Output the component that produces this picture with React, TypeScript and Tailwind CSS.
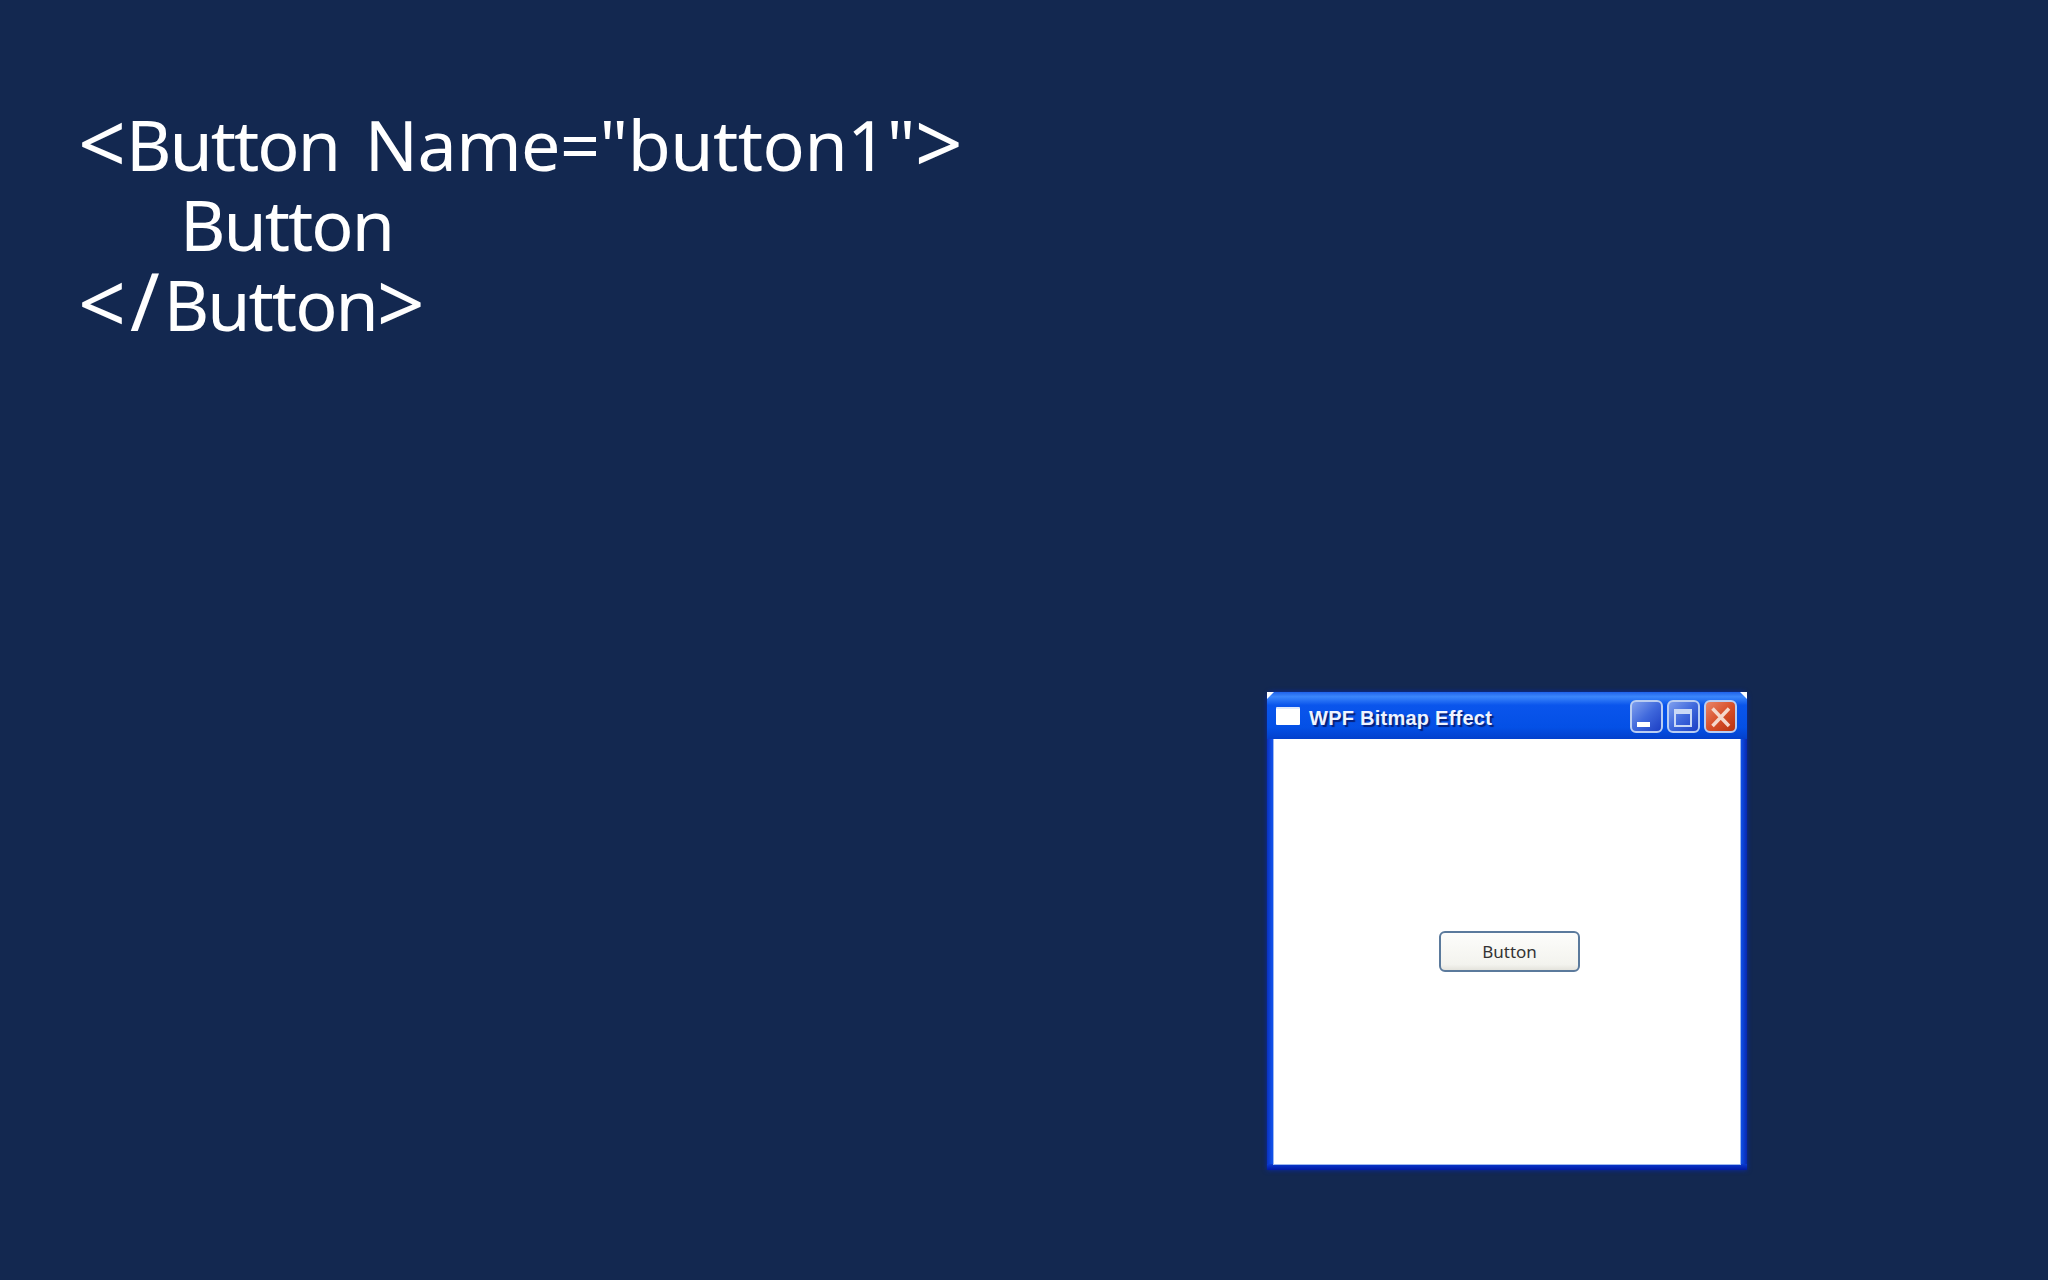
import { useState } from "react";

// XP-style caption button, the glyph is passed in as children
function CaptionButton({ tone, children }: { tone: "blue" | "red"; children: React.ReactNode }) {
  const bg =
    tone === "red"
      ? "bg-[linear-gradient(135deg,#e8866a_0%,#d8502a_50%,#b8330f_100%)]"
      : "bg-[linear-gradient(135deg,#7f9fee_0%,#3f68dc_50%,#1c3fc4_100%)]";
  return (
    <div className={`relative w-[33px] h-[33px] rounded-[6px] border-2 border-[#b9cdf2] ${bg}`}>{children}</div>
  );
}

function XpWindow() {
  const [title] = useState("WPF Bitmap Effect");
  return (
    <div className="absolute left-[1267px] top-[692px] w-[480px] h-[478px] flex flex-col rounded-t-[6px] bg-[linear-gradient(90deg,#0a30c0_0px,#0f50e8_5px,#0f50e8_calc(100%_-_6px),#0828b0_100%)] shadow-[0_0_5px_#0a2aa8]">
      {/* white corner notches */}
      <div className="absolute left-0 top-0 w-[7px] h-[7px] bg-white [clip-path:polygon(0_0,100%_0,0_100%)]" />
      <div className="absolute right-0 top-0 w-[7px] h-[7px] bg-white [clip-path:polygon(0_0,100%_0,100%_100%)]" />
      <div className="h-[47px] shrink-0 flex items-center pl-[9px] pr-[10px] pt-[2px] rounded-t-[6px] bg-[linear-gradient(180deg,#1f62ea_0%,#3b86fb_10%,#0a55ec_28%,#0450e6_75%,#0340cc_100%)]">
        <div className="w-[24px] h-[18px] bg-white rounded-[1px] border-t-2 border-[#dfe9fb] mb-[2px]" />
        <span className="ml-[9px] mt-[3px] text-[20px] font-bold text-[#eef4ff] font-['Liberation_Sans',sans-serif] tracking-[0.25px] [text-shadow:2px_2px_1px_#06207a] leading-none">
          {title}
        </span>
        <div className="ml-auto flex gap-[4px]">
          <CaptionButton tone="blue">
            <div className="absolute left-[5px] bottom-[4px] w-[13px] h-[5px] bg-white" />
          </CaptionButton>
          <CaptionButton tone="blue">
            <div className="absolute left-[5px] top-[7px] w-[18px] h-[18px] border-2 border-t-[5px] border-[#c9d8f6]" />
          </CaptionButton>
          <CaptionButton tone="red">
            <svg className="absolute inset-0" width="29" height="29" viewBox="0 0 29 29">
              <path d="M6.5 6.5L23 24M23 6.5L6.5 24" stroke="#f4d8cc" strokeWidth="3.5" />
            </svg>
          </CaptionButton>
        </div>
      </div>
      <div className="relative z-10 flex-1 mx-[6px] mb-[5px] bg-white border border-[#9db8f0] border-t-0 flex items-center justify-center">
        <div className="ml-[5px] w-[141px] h-[41px] rounded-[6px] border-2 border-[#5b7a9c] bg-[linear-gradient(180deg,#fdfdfb_0%,#f3f3ee_85%,#e4e3dc_100%)] flex items-center justify-center text-[17px] text-[#333] font-['Noto_Sans',sans-serif]">
          Button
        </div>
      </div>
      {/* darker bottom edge of the frame */}
      <div className="absolute left-0 right-0 bottom-0 h-[6px] bg-[linear-gradient(180deg,#0a3ad0,#0018a0)]" />
    </div>
  );
}

// angle brackets are wider in the reference font than in Noto Sans
function Bracket({ children }: { children: React.ReactNode }) {
  return <span className="text-[84px] leading-[0] relative top-[3px]">{children}</span>;
}

function Word({ children }: { children: React.ReactNode }) {
  return <span className="tracking-[-2px]">{children}</span>;
}

export default function App() {
  return (
    <div className="relative w-[2048px] h-[1280px] overflow-hidden bg-[#132850]">
      <div className="pt-[104px] pl-[78px] text-white text-[70px] leading-[80px] font-['Noto_Sans',sans-serif] whitespace-pre">
        <div>
          <Bracket>{"<"}</Bracket>
          <span className="mr-[8px]">
            <Word>Button</Word>
          </span>
          <span className="tracking-[-0.5px]">{' Name="button1"'}</span>
          <Bracket>{">"}</Bracket>
        </div>
        <div className="pl-[102px]">
          <Word>Button</Word>
        </div>
        <div>
          <Bracket>{"<"}</Bracket>
          <span className="mx-[4px] text-[80px] leading-[0]">/</span>
          <Word>Button</Word>
          <Bracket>{">"}</Bracket>
        </div>
      </div>
      <XpWindow />
    </div>
  );
}
